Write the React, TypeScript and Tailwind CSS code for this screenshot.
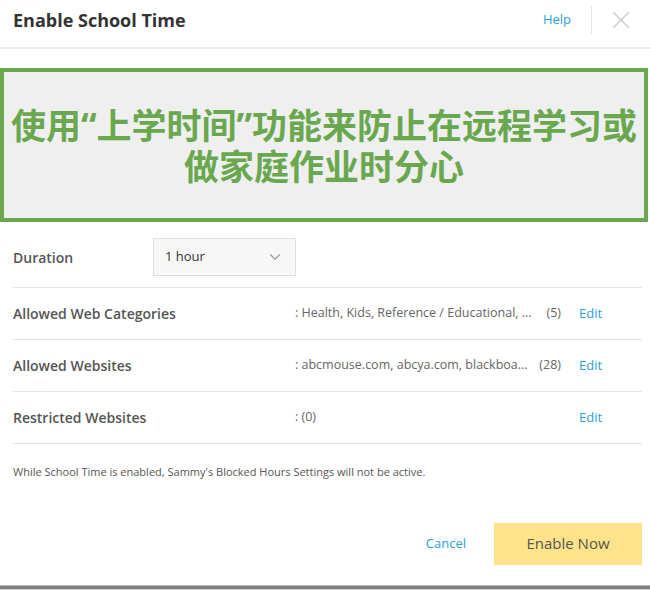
import { ChevronDown, X } from "lucide-react";

const rows = [
  {
    label: "Allowed Web Categories",
    value: ": Health, Kids, Reference / Educational, ...",
    count: "(5)",
  },
  {
    label: "Allowed Websites",
    value: ": abcmouse.com, abcya.com, blackboa...",
    count: "(28)",
  },
  { label: "Restricted Websites", value: ": (0)", count: "" },
];

export default function App() {
  return (
    <div
      className="relative h-[590px] w-[650px] overflow-hidden bg-white text-[#555]"
      style={{ fontFamily: '"Open Sans", "Noto Sans", "Noto Sans CJK SC", sans-serif' }}
    >
      {/* header */}
      <div className="flex h-[49px] items-center border-b-2 border-[#eeeeee] pb-[7px] pl-[13px] pr-[14px]">
        <h1 className="flex-1 text-[18px] font-bold text-[#333]">Enable School Time</h1>
        <a className="text-[13px] text-[#2a9fd8]">Help</a>
        <div className="ml-[20px] mr-[14px] h-[28px] w-px bg-[#e3e3e3]" />
        <X className="h-[30px] w-[30px] text-[#c8c8c8]" strokeWidth={1} />
      </div>

      {/* banner */}
      <div
        className="mt-[19px] mr-[2px] flex h-[154px] flex-col items-center justify-center border-[4px] border-[#6aa84f] bg-[#efefef] pt-[2px] text-center text-[35px] font-bold leading-[41px] text-[#6aa84f]"
        style={{ fontFamily: '"Noto Sans", "Noto Sans CJK SC", sans-serif' }}
      >
        <p>使用“上学时间”功能来防止在远程学习或</p>
        <p>做家庭作业时分心</p>
      </div>

      {/* settings */}
      <div className="pl-[13px] pr-[8px]">
        <div className="flex items-center border-b border-[#e5e5e5] pt-[16px] pb-[11px]">
          <span className="w-[140px] text-[14px] font-semibold">Duration</span>
          <div className="flex h-[38px] w-[143px] items-center justify-between border border-[#dedede] bg-[#f7f7f7] pl-[11px] pr-[11px]">
            <span className="text-[13px] text-[#333]">1 hour</span>
            <ChevronDown className="h-[18px] w-[18px] text-[#999]" strokeWidth={1.5} />
          </div>
        </div>

        {rows.map((row) => (
          <div
            key={row.label}
            className="flex h-[52px] items-center border-b border-[#e5e5e5] text-[12.5px]"
          >
            <span className="w-[282px] text-[14px] font-semibold">{row.label}</span>
            <span className="w-[243px] whitespace-nowrap text-[#666]">{row.value}</span>
            <span className="w-[23px] text-right text-[#666]">{row.count}</span>
            <a className="ml-[18px] text-[13px] text-[#2a9fd8]">Edit</a>
          </div>
        ))}

        <p className="pt-[20px] text-[11px] text-[#555]">
          While School Time is enabled, Sammy's Blocked Hours Settings will not be active.
        </p>

        <div className="mt-[42px] flex items-center justify-end">
          <a className="mr-[28px] text-[13px] text-[#2a9fd8]">Cancel</a>
          <button className="h-[42px] w-[148px] bg-[#fde48a] text-[15px] text-[#555]">
            Enable Now
          </button>
        </div>
      </div>

      {/* bottom edge */}
      <div className="absolute bottom-0 left-0 right-0 h-[5px] border-t border-[#b5b5b5] bg-[#808080]">
        <div className="mt-[3px] h-px bg-[#cfcfcf]" />
      </div>
    </div>
  );
}
